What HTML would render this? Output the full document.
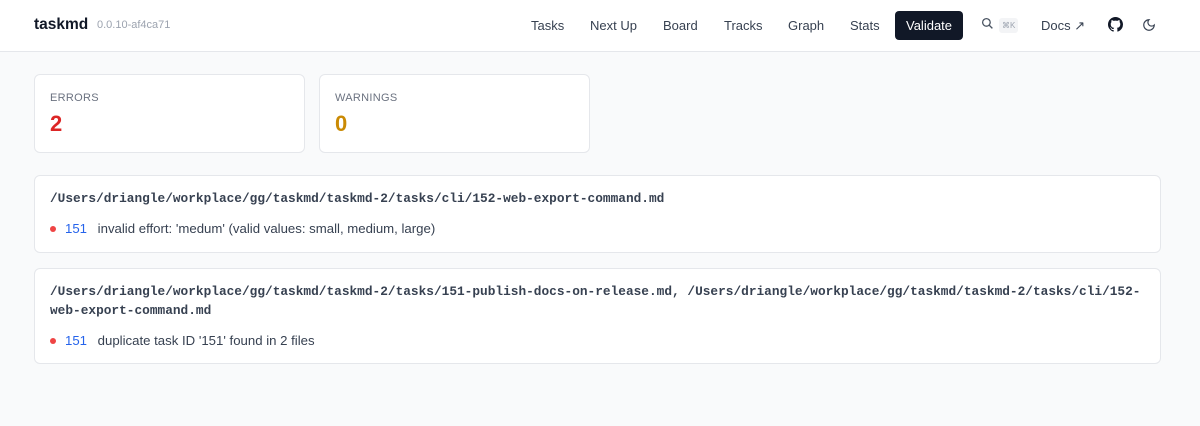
<!DOCTYPE html>
<html><head><style>
*{box-sizing:border-box;margin:0;padding:0}
body{width:1200px;height:426px;background:#f9fafb;font-family:"Liberation Sans",sans-serif;color:#111827;overflow:hidden}
.hd{height:52px;background:#fff;border-bottom:1px solid #e5e7eb;position:relative}
.logo{position:absolute;left:34px;top:16px;font-size:15.5px;font-weight:bold;color:#111827}
.ver{position:absolute;left:97px;top:19px;font-size:11px;color:#9ca3af}
.nav{position:absolute;top:0;height:51px;display:flex;align-items:center;font-size:13px;color:#374151}
.nav span{position:absolute;white-space:nowrap}
.val{background:#111827;color:#fff;border-radius:4px;padding:7px 11px;top:11px}
.card{position:absolute;background:#fff;border:1px solid #e5e7eb;border-radius:6px}
.lbl{font-size:11px;color:#6b7280;letter-spacing:.3px;position:absolute;left:15px;top:17px}
.num{font-size:22px;font-weight:bold;position:absolute;left:15px;top:36px}
.path{font-family:"Liberation Mono",monospace;font-weight:bold;font-size:12.8px;color:#374151;line-height:19px;position:absolute;left:15px;right:12px;top:13px;overflow-wrap:anywhere}
.row{position:absolute;left:15px;font-size:13.2px;color:#374151;white-space:nowrap}
.dot{display:inline-block;width:6px;height:6px;border-radius:50%;background:#ef4444;margin-right:9px;vertical-align:1px}
.id{color:#2563eb;margin-right:7px}
</style></head><body>
<div class="hd">
<div class="logo">taskmd</div><div class="ver">0.0.10-af4ca71</div>
<div class="nav" style="left:0;width:1200px">
<span style="left:531px;top:18px">Tasks</span>
<span style="left:590px;top:18px">Next Up</span>
<span style="left:663px;top:18px">Board</span>
<span style="left:724px;top:18px">Tracks</span>
<span style="left:788px;top:18px">Graph</span>
<span style="left:850px;top:18px">Stats</span>
<span class="val" style="left:895px">Validate</span>
<span style="left:981px;top:17px"><svg width="13" height="13" viewBox="0 0 24 24" fill="none" stroke="#4b5563" stroke-width="2.4"><circle cx="10" cy="10" r="7"/><path d="M15 15l6 6"/></svg></span>
<span style="left:999px;top:18px;background:#f3f4f6;color:#9ca3af;font-size:8px;padding:3px 3px;border-radius:3px">⌘K</span>
<span style="left:1041px;top:18px">Docs ↗</span>
<span style="left:1108px;top:17px"><svg width="15" height="15" viewBox="0 0 16 16" fill="#111827"><path d="M8 0C3.58 0 0 3.58 0 8c0 3.540 2.290 6.530 5.470 7.590.4.07.55-.17.55-.38 0-.19-.01-.82-.01-1.490-2.010.37-2.530-.49-2.690-.94-.09-.23-.48-.94-.82-1.130-.28-.15-.68-.52-.01-.53.63-.01 1.080.58 1.230.82.72 1.210 1.870.87 2.330.66.07-.52.28-.87.51-1.070-1.780-.2-3.640-.89-3.640-3.950 0-.87.31-1.590.82-2.150-.08-.2-.36-1.020.08-2.120 0 0 .67-.21 2.200.82.64-.18 1.320-.27 2-.27.68 0 1.360.09 2 .27 1.530-1.040 2.200-.82 2.200-.82.44 1.100.16 1.920.08 2.120.51.56.82 1.270.82 2.150 0 3.070-1.870 3.750-3.650 3.950.29.25.54.73.54 1.480 0 1.070-.01 1.930-.01 2.200 0 .21.15.46.55.38A8.013 8.013 0 0016 8c0-4.420-3.580-8-8-8z"/></svg></span>
<span style="left:1142px;top:18px"><svg width="14" height="14" viewBox="0 0 24 24" fill="none" stroke="#374151" stroke-width="2"><path d="M12 3a6 6 0 009 9 9 9 0 11-9-9z"/></svg></span>
</div></div>
<div class="card" style="left:34px;top:74px;width:271px;height:79px"><div class="lbl">ERRORS</div><div class="num" style="color:#dc2626">2</div></div>
<div class="card" style="left:319px;top:74px;width:271px;height:79px"><div class="lbl">WARNINGS</div><div class="num" style="color:#ca8a04">0</div></div>
<div class="card" style="left:34px;top:175px;width:1127px;height:78px">
<div class="path">/Users/driangle/workplace/gg/taskmd/taskmd-2/tasks/cli/152-web-export-command.md</div>
<div class="row" style="top:45px"><span class="dot"></span><span class="id">151</span> invalid effort: 'medum' (valid values: small, medium, large)</div></div>
<div class="card" style="left:34px;top:268px;width:1127px;height:96px">
<div class="path">/Users/driangle/workplace/gg/taskmd/taskmd-2/tasks/151-publish-docs-on-release.md, /Users/driangle/workplace/gg/taskmd/taskmd-2/tasks/cli/152-<br>web-export-command.md</div>
<div class="row" style="top:64px"><span class="dot"></span><span class="id">151</span> duplicate task ID '151' found in 2 files</div></div>
</body></html>
